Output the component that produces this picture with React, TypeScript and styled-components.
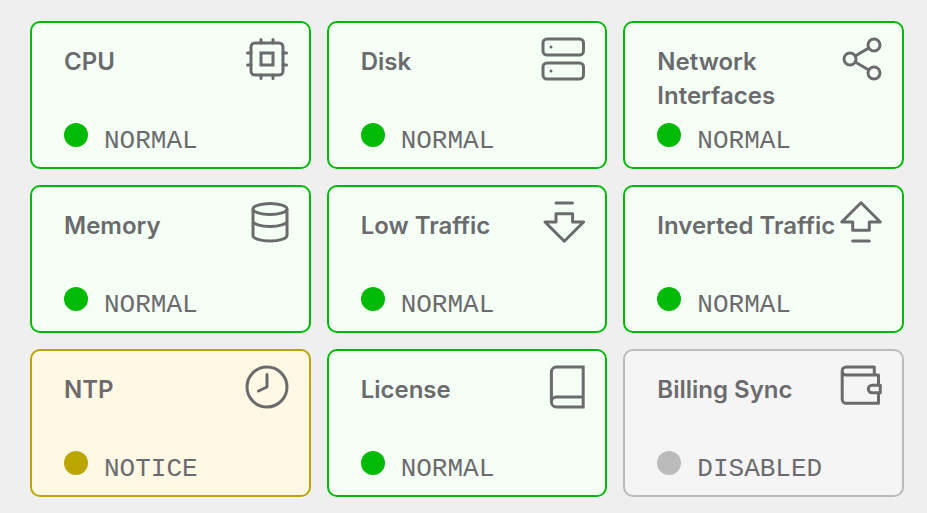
import React from "react";
import styled, { createGlobalStyle } from "styled-components";

type Status = "normal" | "notice" | "disabled";

const palette: Record<Status, { accent: string; surface: string }> = {
  normal: { accent: "#00bb06", surface: "#f5fff6" },
  notice: { accent: "#bba600", surface: "#fff8e5" },
  disabled: { accent: "#bbbbbb", surface: "#f5f5f5" },
};

const GlobalStyle = createGlobalStyle`
  *, *::before, *::after { box-sizing: border-box; }
  body {
    margin: 0;
    background: #efefef;
    color: #6b6b6e;
    font-family: Inter, "Liberation Sans", sans-serif;
  }
`;

const Grid = styled.main`
  display: grid;
  grid-template-columns: repeat(3, minmax(0, 1fr));
  gap: 16px;
  padding: 21px 23px 16px 30px;
`;

const Card = styled.section<{ $status: Status }>`
  display: flex;
  flex-direction: column;
  justify-content: space-between;
  min-height: 148px;
  padding: 12px 18px 8px 32px;
  border: 2px solid ${({ $status }) => palette[$status].accent};
  border-radius: 10px;
  background: ${({ $status }) => palette[$status].surface};
`;

const CardHeader = styled.header`
  display: flex;
  align-items: flex-start;
  min-height: 78px;
`;

const Title = styled.h2`
  flex: 1;
  min-width: 0;
  margin: 0;
  padding-top: 10px;
  font-size: 24px;
  font-weight: 600;
  line-height: 34px;
`;

const Icon = styled.svg`
  flex: none;
  width: 48px;
  height: 48px;
  fill: none;
  stroke: #6b6b6e;
  stroke-width: 3;
`;

const StatusRow = styled.div`
  display: flex;
  gap: 16px;
`;

const Dot = styled.span<{ $status: Status }>`
  flex: none;
  width: 24px;
  height: 24px;
  border-radius: 50%;
  background: ${({ $status }) => palette[$status].accent};
`;

const StatusText = styled.span`
  font-family: "Liberation Mono", monospace;
  font-size: 26px;
  line-height: 36px;
  text-transform: uppercase;
`;

const icons = {
  cpu: (
    <g strokeLinecap="round">
      <rect x="8" y="8" width="32" height="32" rx="4" />
      <rect x="18" y="18" width="12" height="12" />
      <path d="M18 4.5V8M30 4.5V8M18 40v3.5M30 40v3.5M4.5 18H8M4.5 30H8M40 18h3.5M40 30h3.5" />
    </g>
  ),
  disk: (
    <g>
      <rect x="4" y="4" width="40.5" height="16" rx="4" />
      <rect x="4" y="28" width="40.5" height="16" rx="4" />
      <path d="M12 12h.01M12 36h.01" strokeLinecap="round" />
    </g>
  ),
  network: (
    <g>
      <circle cx="38" cy="10" r="6" />
      <circle cx="14" cy="24" r="6" />
      <circle cx="38" cy="38" r="6" />
      <path d="M19.2 21l13.6-8M19.2 27l13.6 8" />
    </g>
  ),
  memory: (
    <g>
      <ellipse cx="27" cy="10" rx="17" ry="5.5" />
      <path d="M10 10v26.5c0 3 7.6 5.5 17 5.5s17-2.5 17-5.5V10M10 22c0 3 7.6 5.5 17 5.5S44 25 44 22" />
    </g>
  ),
  down: (
    <g strokeLinecap="round" strokeLinejoin="round">
      <path d="M17 4h16.5M17 23v-8.2h16.6V23h11L25.3 42.2 6 23z" />
    </g>
  ),
  up: (
    <g strokeLinecap="round" strokeLinejoin="round">
      <path d="M16.7 42h16.6M16.7 23v8.2h16.6V23h11L25 3.8 5.7 23z" />
    </g>
  ),
  clock: (
    <g strokeLinecap="round" strokeLinejoin="round">
      <circle cx="24" cy="24" r="20" />
      <path d="M24 11.5V24l-8.5 4" />
    </g>
  ),
  book: (
    <path d="M44.2 4H17.4a5 5 0 0 0-5 5v30a5 5 0 0 0 5 5h26.8zM12.4 39a5 5 0 0 1 5-5h26.8" />
  ),
  wallet: (
    <g strokeLinejoin="round">
      <path d="M38.3 12V4H10.2a4 4 0 0 0 0 8h32.3v10.3M42.5 29.7V40.3H10.2a4 4 0 0 1-4-4V8" />
      <path d="M44.3 22.3H36a3.7 3.7 0 0 0 0 7.4h8.3z" />
    </g>
  ),
};

const checks: { title: string; status: Status; icon: keyof typeof icons }[] = [
  { title: "CPU", status: "normal", icon: "cpu" },
  { title: "Disk", status: "normal", icon: "disk" },
  { title: "Network Interfaces", status: "normal", icon: "network" },
  { title: "Memory", status: "normal", icon: "memory" },
  { title: "Low Traffic", status: "normal", icon: "down" },
  { title: "Inverted Traffic", status: "normal", icon: "up" },
  { title: "NTP", status: "notice", icon: "clock" },
  { title: "License", status: "normal", icon: "book" },
  { title: "Billing Sync", status: "disabled", icon: "wallet" },
];

export default function App() {
  return (
    <>
      <GlobalStyle />
      <Grid>
        {checks.map(({ title, status, icon }) => (
          <Card key={title} $status={status}>
            <CardHeader>
              <Title>{title}</Title>
              <Icon viewBox="0 0 48 48" aria-hidden="true">
                {icons[icon]}
              </Icon>
            </CardHeader>
            <StatusRow>
              <Dot $status={status} />
              <StatusText>{status}</StatusText>
            </StatusRow>
          </Card>
        ))}
      </Grid>
    </>
  );
}
